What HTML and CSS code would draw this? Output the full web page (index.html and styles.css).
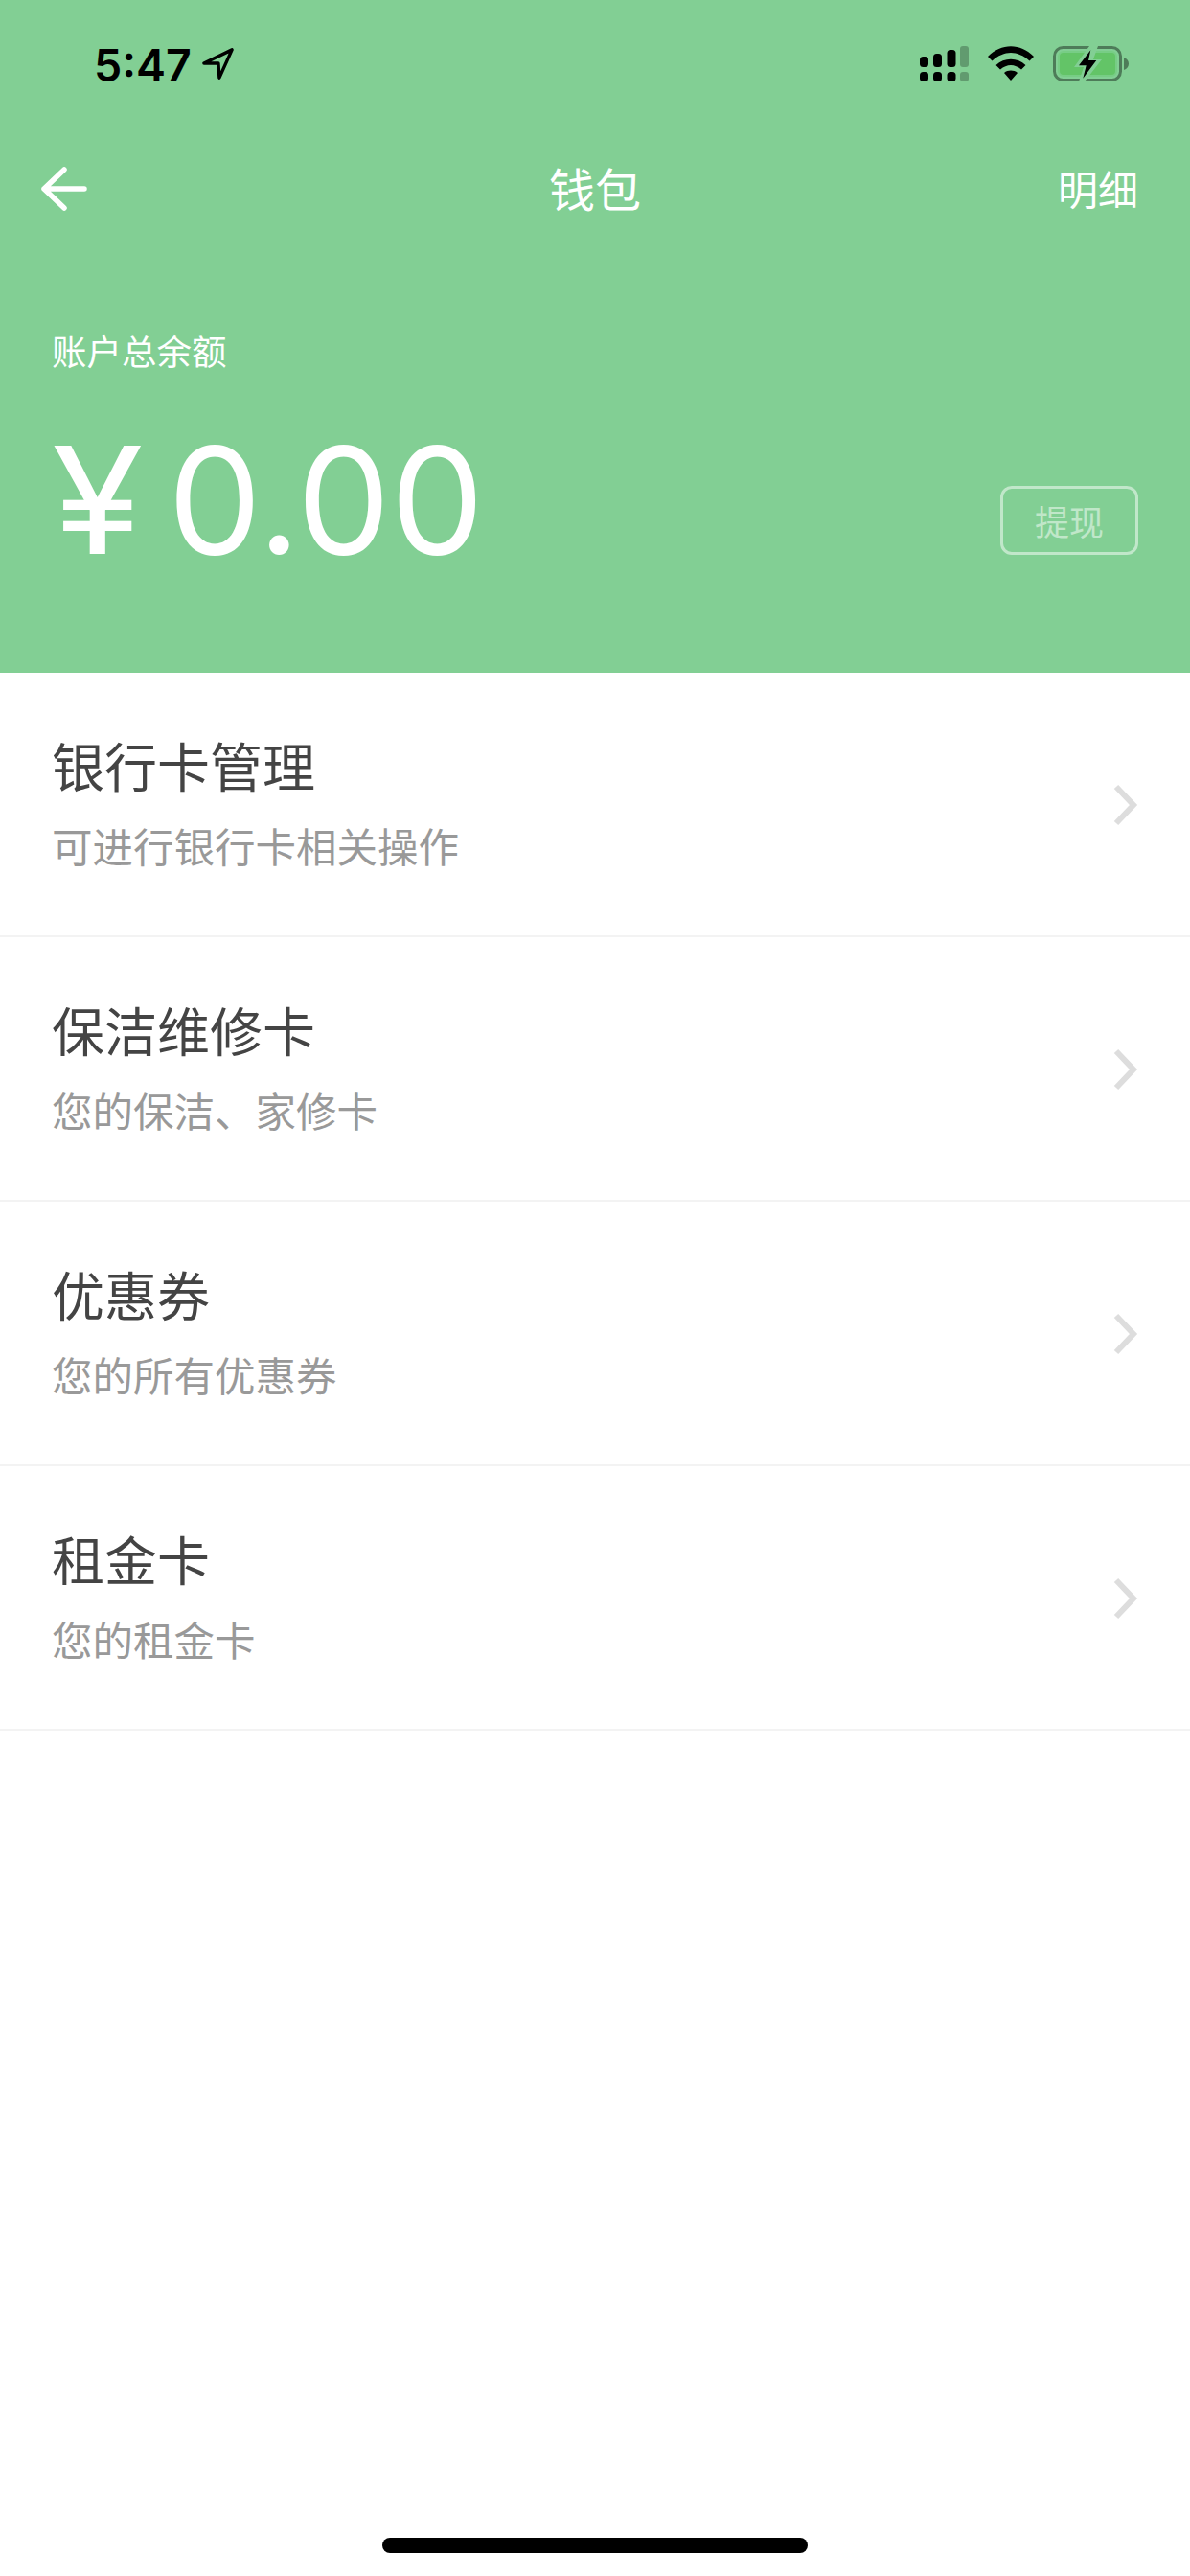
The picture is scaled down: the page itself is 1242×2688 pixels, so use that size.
FILE: index.html
```html
<!DOCTYPE html>
<html lang="zh-CN">
<head>
    <meta charset="UTF-8">
    <meta name="viewport" content="width=device-width, initial-scale=1.0">
    <title>钱包</title>
    <link rel="stylesheet" href="styles.css">
</head>
<body>
    <div id="wallet">
        <div class="header">
            <div class="status-bar">
                <div class="status-time">
                    <span class="clock">5:47</span>
                    <svg class="location" width="33" height="33" viewBox="0 0 35 35">
                        <path d="M2 17 L33 2 L19 33 L18 17 Z" fill="none" stroke="#000" stroke-width="3.600" stroke-linejoin="round"/>
                    </svg>
                </div>
                <div class="status-icons">
                    <svg width="51" height="37" viewBox="0 0 51 37">
                        <rect x="0" y="11" width="9" height="11" rx="3.500"/>
                        <rect x="14" y="8" width="9" height="14" rx="3.500"/>
                        <rect x="28.500" y="4" width="9" height="18" rx="3.500"/>
                        <rect x="42" y="0" width="9" height="22" rx="3" opacity=".25"/>
                        <rect x="0" y="27" width="9" height="10" rx="3.500"/>
                        <rect x="14" y="27" width="9" height="10" rx="3.500"/>
                        <rect x="28.500" y="27" width="9" height="10" rx="3.500"/>
                        <rect x="42" y="27" width="9" height="10" rx="3" opacity=".25"/>
                    </svg>
                    <svg width="48" height="36" viewBox="0 0 48 36">
                        <path d="M0 11 C14 -3.500 34 -3.500 48 11 L43.500 15.500 C31 4 17 4 4.500 15.500 Z"/>
                        <path d="M8.500 20 C17 11.500 31 11.500 39.500 20 L35 24.500 C28 18.500 20 18.500 13 24.500 Z"/>
                        <path d="M17 28 C21 24.800 27 24.800 31 28 L24 36 Z"/>
                    </svg>
                    <svg width="79" height="37" viewBox="0 0 79 37">
                        <rect x="1.500" y="1.500" width="69" height="34" rx="9" fill="none" stroke="#000" stroke-opacity=".4" stroke-width="3"/>
                        <rect x="6" y="6" width="60" height="25" rx="5" fill="#63c467" stroke="#77cd85" stroke-width="2"/>
                        <path d="M74 12 C77 13 79 15.500 79 18.500 C79 21.500 77 24 74 25 Z" fill="#000" fill-opacity=".4"/>
                        <path d="M38 0 L22 22 H32 L27 37 H33 L51 14 H42 L47 0 Z" fill="#82cf94"/>
                        <path d="M39.300 4.300 L27 20.300 H34.700 L31.300 33.700 L45.300 15 H37 Z" fill="#000"/>
                    </svg>
                </div>
            </div>
            <div class="nav-bar">
                <svg class="back" width="48" height="46" viewBox="0 0 48 46">
                    <path d="M24 3 L3 23 L24 43 M3 23 H45" fill="none" stroke="#fff" stroke-width="5.500" stroke-linecap="round" stroke-linejoin="round"/>
                </svg>
                <div class="nav-title">钱包</div>
                <div class="nav-action">明细</div>
            </div>
            <div class="balance-label">账户总余额</div>
            <div class="balance-row">
                <div class="balance-amount"><span class="yen">¥</span>0.00</div>
                <button class="withdraw">提现</button>
            </div>
        </div>

        <div class="menu-row">
            <div class="menu-text">
                <div class="menu-title">银行卡管理</div>
                <div class="menu-sub">可进行银行卡相关操作</div>
            </div>
            <svg class="chevron" width="28" height="46" viewBox="0 0 28 46"><path d="M3 5 L21 24 L3 43" /></svg>
        </div>
        <div class="menu-row">
            <div class="menu-text">
                <div class="menu-title">保洁维修卡</div>
                <div class="menu-sub">您的保洁、家修卡</div>
            </div>
            <svg class="chevron" width="28" height="46" viewBox="0 0 28 46"><path d="M3 5 L21 24 L3 43" /></svg>
        </div>
        <div class="menu-row">
            <div class="menu-text">
                <div class="menu-title">优惠券</div>
                <div class="menu-sub">您的所有优惠券</div>
            </div>
            <svg class="chevron" width="28" height="46" viewBox="0 0 28 46"><path d="M3 5 L21 24 L3 43" /></svg>
        </div>
        <div class="menu-row">
            <div class="menu-text">
                <div class="menu-title">租金卡</div>
                <div class="menu-sub">您的租金卡</div>
            </div>
            <svg class="chevron" width="28" height="46" viewBox="0 0 28 46"><path d="M3 5 L21 24 L3 43" /></svg>
        </div>

        <div class="home-indicator"></div>
    </div>
</body>
</html>
```

FILE: styles.css
```css
body {
    margin: 0;
    background: #fff;
    font-family: Roboto, "Noto Sans CJK SC", sans-serif;
}

#wallet {
    display: flex;
    flex-direction: column;
    height: 2688px;
    overflow: hidden;
}

.header {
    height: 702px;
    box-sizing: border-box;
    background: #82cf94;
    color: #fff;
}

.status-bar {
    display: flex;
    justify-content: space-between;
    align-items: flex-start;
    height: 157px;
    padding: 48px 64px 0 98px;
    box-sizing: border-box;
}

.status-time {
    display: flex;
    align-items: flex-start;
    gap: 11px;
}

.clock {
    font-family: Inter, sans-serif;
    font-size: 46.500px;
    line-height: 40px;
    font-weight: 600;
    color: #000;
}

.location {
    margin-top: 2px;
}

.status-icons {
    display: flex;
    align-items: flex-start;
    gap: 20px;
}

.nav-bar {
    display: grid;
    grid-template-columns: 1fr auto 1fr;
    align-items: center;
    height: 80px;
    padding: 0 54px;
}

.back {
    margin-left: -11px;
}

.nav-title {
    padding-bottom: 5px;
    font-size: 48px;
}

.nav-action {
    padding-bottom: 3px;
    font-size: 42px;
    text-align: right;
}

.balance-label {
    margin: 107px 0 0 54px;
    font-size: 36.500px;
    line-height: 50px;
}

.balance-row {
    display: flex;
    justify-content: space-between;
    align-items: flex-end;
    margin-top: 28px;
    padding: 0 54px;
}

.balance-amount {
    font-family: Inter, sans-serif;
    font-size: 155px;
    line-height: 200px;
    font-weight: 400;
}

.yen {
    display: inline-block;
    margin-right: 36px;
    transform: scaleX(1.12);
    transform-origin: left;
}

.withdraw {
    width: 144px;
    height: 72px;
    margin-bottom: 43px;
    padding: 0;
    border: 3px solid rgba(255, 255, 255, 0.5);
    border-radius: 12px;
    background: none;
    color: rgba(255, 255, 255, 0.5);
    font-family: inherit;
    font-size: 36px;
}

.menu-row {
    display: flex;
    justify-content: space-between;
    align-items: center;
    height: 276px;
    box-sizing: border-box;
    padding: 0 52px 0 54px;
    border-bottom: 2px solid #f3f3f3;
}

.menu-title {
    font-size: 55px;
    line-height: 76px;
    color: #444;
}

.menu-sub {
    margin-top: 17px;
    font-size: 42.500px;
    line-height: 58px;
    color: #999;
}

.chevron path {
    fill: none;
    stroke: #ddd;
    stroke-width: 6;
    stroke-linecap: butt;
    stroke-linejoin: miter;
}

.home-indicator {
    width: 444px;
    height: 16px;
    margin: auto auto 24px;
    border-radius: 8px;
    background: #000;
}
```
